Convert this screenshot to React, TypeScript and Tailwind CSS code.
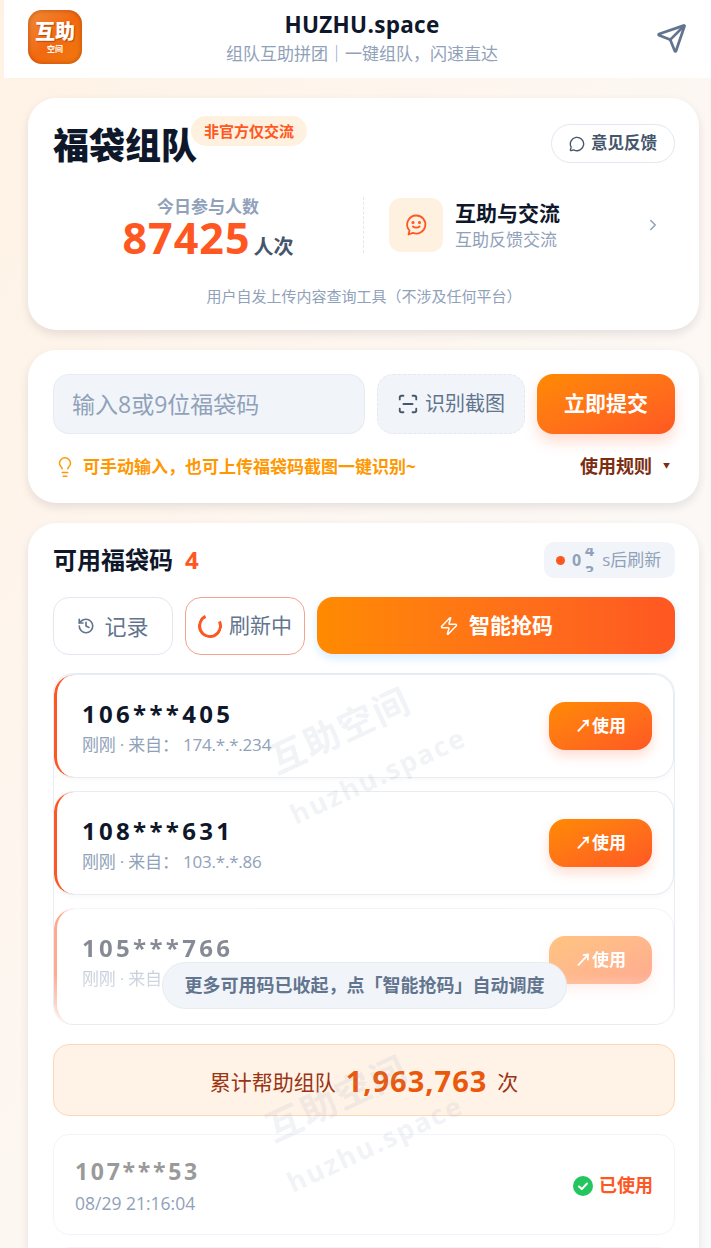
import { ChevronRight, History, Lightbulb, MessageCircle, ScanLine, Send, Zap } from "lucide-react";

const font = { fontFamily: '"Open Sans", "Noto Sans CJK SC", sans-serif' };

function Watermark({ top, left }: { top: string; left: string }) {
  return (
    <div className={`absolute ${left} ${top} pointer-events-none select-none -rotate-[25deg] origin-center flex flex-col items-center w-[220px] z-20`}>
      <span className="text-[36px] leading-[44px] font-bold tracking-[2px] text-slate-400/15 whitespace-nowrap">互助空间</span>
      <span className="text-[27px] leading-[36px] font-bold tracking-[2px] text-slate-400/15 whitespace-nowrap ml-[31px] mt-[17px]">huzhu.space</span>
    </div>
  );
}

function CodeRow({ code, meta, faded }: { code: string; meta: string; faded?: boolean }) {
  return (
    <div className={`relative shrink-0 rounded-[20px] bg-white border border-slate-200/80 border-l-0 shadow-[0_2px_6px_rgba(15,23,42,0.03)] flex items-center justify-between pl-[28px] pr-[21px] overflow-hidden ${faded ? "h-[117px] pb-[13px] opacity-50 border-slate-100" : "h-[104px]"}`}>
      <div className="absolute left-0 top-0 bottom-0 w-[20px] border-l-[3px] border-[#ff5722] rounded-l-[20px]" />
      <div className={`flex flex-col pt-[4px] ${faded ? "blur-[0.6px]" : ""}`}>
        <span className="text-[24px] leading-[30px] font-bold tracking-[3.3px] text-[#0f172a]">{code}</span>
        <span className="text-[17px] leading-[24px] tracking-[-0.2px] mt-[4px] text-slate-400">{meta}</span>
      </div>
      <button className="w-[103px] h-[48px] rounded-[16px] bg-gradient-to-br from-[#ff8a00] to-[#ff5722] text-white text-[17px] font-semibold shadow-[0_6px_12px_rgba(255,87,34,0.2)]">
        ↗使用
      </button>
    </div>
  );
}

export default function App() {
  return (
    <div className="relative h-[1248px] overflow-hidden bg-gradient-to-br from-[#fff2e5] via-[#fdf7f2] to-[#fafafa]" style={font}>
      {/* Header */}
      <header className="ml-[4px] h-[78px] bg-white flex items-center justify-between pl-[24px] pr-[24px]">
        <div className="w-[54px] h-[54px] mb-[4px] rounded-[14px] bg-gradient-to-br from-[#f08a35] via-[#f2690f] to-[#f0780f] flex flex-col items-center justify-center text-white shadow-[inset_0_0_5px_rgba(150,50,0,0.6)]">
          <span className="text-[20px] leading-[22px] font-black [text-shadow:1px_1px_1px_rgba(140,50,0,0.6)]">互助</span>
          <span className="text-[8px] leading-[11px] font-bold">空间</span>
        </div>
        <div className="flex flex-col items-center mr-[14px]">
          <span className="text-[22.5px] leading-[30px] -mt-[2px] mb-[2px] font-bold tracking-[0.3px] text-[#0f172a]">HUZHU.space</span>
          <span className="text-[17px] leading-[24px] text-slate-400">组队互助拼团｜一键组队，闪速直达</span>
        </div>
        <Send className="w-[31px] h-[31px] mb-[2px] text-slate-500" strokeWidth={2.1} />
      </header>

      <main className="ml-[28px] mr-[12px] mt-[20px] flex flex-col gap-[20px]">
        {/* Title card */}
        <section className="relative h-[232px] bg-white rounded-[28px] shadow-[0_4px_10px_rgba(15,23,42,0.1)] pl-[25px] pr-[24px] pt-[26px]">
          <div className="flex items-start justify-between">
            <div className="relative">
              <h1 className="text-[36px] leading-[44px] font-black text-[#0f172a]">福袋组队</h1>
              <span className="absolute left-[138px] -top-[8px] w-[116px] h-[30px] rounded-full bg-[#fff1e0] flex items-center justify-center text-[15px] font-bold text-[#ff5722] whitespace-nowrap">非官方仅交流</span>
            </div>
            <button className="w-[124px] h-[39px] rounded-full border border-slate-200 flex items-center justify-center gap-[6px] text-[16.5px] font-bold text-slate-600">
              <MessageCircle className="w-[16px] h-[16px]" />
              意见反馈
            </button>
          </div>
          <div className="flex mt-[29px]">
            <div className="w-[311px] flex flex-col items-center border-r border-dashed border-slate-200 h-[56px]">
              <span className="text-[17px] leading-[24px] font-semibold text-slate-400 -mt-[2px]">今日参与人数</span>
              <div className="flex items-end -mt-[5px]">
                <span className="text-[43px] leading-[48px] font-bold tracking-[1px] text-[#ff5722]">87425</span>
                <span className="text-[20px] leading-[28px] ml-[3px] mb-[1px] font-bold text-slate-600">人次</span>
              </div>
            </div>
            <div className="flex-1 flex items-center pl-[25px] h-[56px]">
              <div className="w-[54px] h-[54px] rounded-[12px] bg-[#fff1e0] flex items-center justify-center">
                <svg viewBox="0 0 24 24" className="w-[24px] h-[24px]" fill="none" stroke="#ff5722" strokeWidth="1.8" strokeLinecap="round" strokeLinejoin="round">
                  <path d="M12.500 2.500a9 9 0 1 1-3.600 17.300L4.500 21.500l1-4A9 9 0 0 1 12.500 2.500z" />
                  <path d="M9 13.500c1.600 1.600 5 1.600 6.600 0" />
                  <circle cx="9" cy="9.500" r="0.7" fill="#ff5722" />
                  <circle cx="15.500" cy="9.500" r="0.7" fill="#ff5722" />
                </svg>
              </div>
              <div className="flex flex-col ml-[12px]">
                <span className="text-[21px] leading-[30px] font-bold text-[#0f172a]">互助与交流</span>
                <span className="text-[17px] leading-[24px] text-slate-400">互助反馈交流</span>
              </div>
              <ChevronRight className="w-[18px] h-[18px] text-slate-400 ml-auto mr-[13px]" />
            </div>
          </div>
          <p className="mt-[33px] text-center text-[15px] leading-[20px] text-slate-400">用户自发上传内容查询工具（不涉及任何平台）</p>
        </section>

        {/* Submit card */}
        <section className="h-[153px] bg-white rounded-[28px] shadow-[0_4px_10px_rgba(15,23,42,0.1)] pl-[25px] pr-[24px] pt-[24px]">
          <div className="flex gap-[12px]">
            <div className="w-[312px] h-[60px] rounded-[16px] bg-[#f1f5f9] border border-slate-200/70 flex items-center pl-[18px] text-[23px] text-slate-400">输入8或9位福袋码</div>
            <button className="w-[148px] h-[60px] rounded-[16px] bg-[#f1f5f9] border border-dashed border-slate-200 flex items-center justify-center gap-[6px] text-[20px] text-slate-500">
              <ScanLine className="w-[22px] h-[22px] text-slate-600" />
              识别截图
            </button>
            <button className="w-[138px] h-[60px] rounded-[16px] bg-gradient-to-br from-[#ff8a00] to-[#ff5722] text-white text-[21px] font-bold shadow-[0_8px_14px_rgba(255,87,34,0.2)]">立即提交</button>
          </div>
          <div className="flex items-center justify-between mt-[19px]">
            <div className="flex items-center gap-[7px] text-[17px] font-bold text-[#ff9800] ml-[1px]">
              <Lightbulb className="w-[22px] h-[22px]" strokeWidth={1.6} />
              可手动输入，也可上传福袋码截图一键识别~
            </div>
            <div className="flex items-center gap-[11px] text-[18px] font-bold text-[#7c2d12] mr-[5px]">
              使用规则
              <span className="text-[7px] text-[#7c2d12]">▼</span>
            </div>
          </div>
        </section>

        {/* Available codes */}
        <section className="relative h-[800px] bg-white rounded-[28px] shadow-[0_4px_10px_rgba(15,23,42,0.1)] pl-[25px] pr-[24px] pt-[19px]">
          <div className="flex items-center justify-between">
            <div className="flex items-center gap-[12px]">
              <h2 className="text-[24px] leading-[36px] font-bold text-[#0f172a]">可用福袋码</h2>
              <span className="text-[24px] font-bold text-[#ff5722]">4</span>
            </div>
            <div className="w-[131px] h-[36px] rounded-[10px] bg-[#f1f5f9] flex items-center pl-[12px] text-slate-400">
              <span className="w-[9px] h-[9px] rounded-full bg-[#ff5722]" />
              <span className="ml-[7px] text-[16px] font-bold">0</span>
              <span className="ml-[3px] w-[11px] h-[24px] overflow-hidden flex flex-col items-center text-[16px] leading-[24px] font-bold">
                <span className="-mt-[10px]">4</span>
                <span className="-mt-[2px]">3</span>
              </span>
              <span className="ml-[7px] text-[17px]">s后刷新</span>
            </div>
          </div>

          <div className="flex gap-[12px] mt-[19px]">
            <button className="w-[120px] h-[58px] rounded-[16px] border border-slate-200 flex items-center justify-center gap-[9px] text-[22px] text-slate-500">
              <History className="w-[18px] h-[18px]" strokeWidth={2.2} />
              记录
            </button>
            <button className="w-[120px] h-[58px] rounded-[16px] border border-[#f3a48e] flex items-center justify-center gap-[7px] text-[21px] text-slate-500">
              <span className="w-[24px] h-[24px] rounded-full border-[3px] border-[#ff5722] border-t-transparent rotate-[20deg]" />
              刷新中
            </button>
            <button className="flex-1 h-[57px] rounded-[16px] bg-gradient-to-r from-[#ff8a00] to-[#ff5722] text-white text-[21px] font-bold flex items-center justify-center gap-[10px] shadow-[0_4px_10px_rgba(56,160,255,0.2)]">
              <Zap className="w-[20px] h-[20px]" strokeWidth={1.8} />
              智能抢码
            </button>
          </div>

          <div className="relative mt-[18px] h-[352px] rounded-[20px] border border-slate-200/80 flex flex-col gap-[13px] overflow-hidden">
            <CodeRow code="106***405" meta="刚刚 · 来自： 174.*.*.234" />
            <CodeRow code="108***631" meta="刚刚 · 来自： 103.*.*.86" />
            <CodeRow code="105***766" meta="刚刚 · 来自： 112.*.*.57" faded />
            <div className="absolute inset-x-0 bottom-0 h-[50px] bg-gradient-to-b from-white/0 to-white/80" />
            <div className="absolute left-[108px] bottom-[15px] w-[405px] h-[47px] rounded-full bg-[#f1f5f9] border border-slate-200/70 flex items-center justify-center text-[18px] font-semibold text-slate-500 whitespace-nowrap">更多可用码已收起，点「智能抢码」自动调度</div>
          </div>

          <div className="mt-[19px] h-[72px] pt-[6px] rounded-[16px] border border-[#fcd9b6] bg-[#fff3e8] flex items-center justify-center gap-[10px] text-[#9a3412] text-[21px]">
            累计帮助组队
            <span className="text-[29px] font-bold tracking-[1px] text-[#ea580c] -mt-[5px]">1,963,763</span>
            次
          </div>

          <div className="mt-[18px] h-[101px] pt-[2px] rounded-[16px] border border-slate-100 flex items-center justify-between pl-[21px] pr-[21px]">
            <div className="flex flex-col">
              <span className="text-[23px] leading-[30px] font-bold tracking-[2.7px] text-[#9a9a9a]">107***53</span>
              <span className="text-[17.5px] leading-[24px] mt-[5px] text-slate-400">08/29 21:16:04</span>
            </div>
            <div className="flex items-center gap-[6px] text-[18px] font-bold text-[#ff5722]">
              <svg viewBox="0 0 20 20" className="w-[20px] h-[20px]">
                <circle cx="10" cy="10" r="10" fill="#22c55e" />
                <path d="M6 10.5l2.8 2.6L14 7.5" fill="none" stroke="white" strokeWidth="2" strokeLinecap="round" strokeLinejoin="round" />
              </svg>
              已使用
            </div>
          </div>

          <div className="mt-[12px] h-[101px] rounded-[16px] border border-slate-100" />
        </section>
      </main>

      <Watermark top="top-[706px]" left="left-[241px]" />
      <Watermark top="top-[1074px]" left="left-[238px]" />
    </div>
  );
}
